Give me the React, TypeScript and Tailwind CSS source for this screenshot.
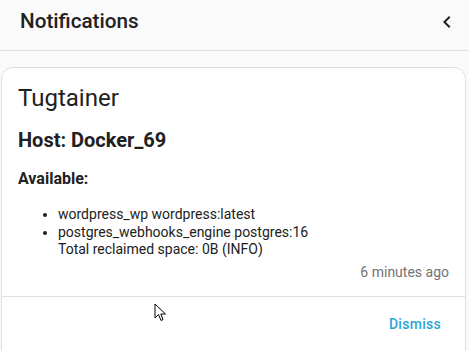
import React from 'react';

function Cursor() {
  return (
    <svg className="absolute left-[154px] top-[303px]" width="14" height="20" viewBox="0 0 14 20">
      <path d="M1 1 L1 15 L4.5 11.5 L7 17.5 L9 16.5 L6.8 11 L11.5 11 Z" fill="#fff" stroke="#000" strokeWidth="1" strokeLinejoin="round" />
    </svg>
  );
}

export default function App() {
  return (
    <div className="relative w-[469px] h-[351px] overflow-hidden bg-[#fafafa] text-[#212121]" style={{ fontFamily: 'Roboto, "Noto Sans", sans-serif' }}>
      {/* header */}
      <div className="h-[51px] pb-[6px] flex items-center justify-between pl-5 pr-[10px] border-b border-[#e0e0e0]">
        <div className="text-[20.7px] font-medium">Notifications</div>
        <svg width="24" height="24" viewBox="0 0 24 24">
          <path d="M15.41 16.58 10.83 12l4.58-4.59L14 6l-6 6 6 6z" fill="#212121" />
        </svg>
      </div>

      {/* notification card */}
      <div className="mt-4 ml-[1px] w-[465px] h-[300px] bg-white border border-[#e0e0e0] rounded-xl">
        <div className="px-4 pt-[14px]">
          <div className="text-[24px] leading-8">Tugtainer</div>
          <div className="mt-[14px] text-[20px] font-bold leading-6">Host: Docker_69</div>
          <div className="mt-[17px] text-[16px] font-bold leading-5">Available:</div>
          <ul className="mt-[17px] pl-[40px] list-disc text-[14px] leading-[17.5px]">
            <li>wordpress_wp wordpress:latest</li>
            <li>postgres_webhooks_engine postgres:16<br />Total reclaimed space: 0B (INFO)</li>
          </ul>
          <div className="mt-[3px] text-right text-[14px] text-[#727272] leading-5">6 minutes ago</div>
        </div>
        <div className="mt-[14px] border-t border-[#e0e0e0] h-[57px] flex items-center justify-end pr-[24px]">
          <span className="text-[14px] font-medium text-[#2aa6d3] tracking-[0.02em]">Dismiss</span>
        </div>
      </div>
      <Cursor />
    </div>
  );
}
